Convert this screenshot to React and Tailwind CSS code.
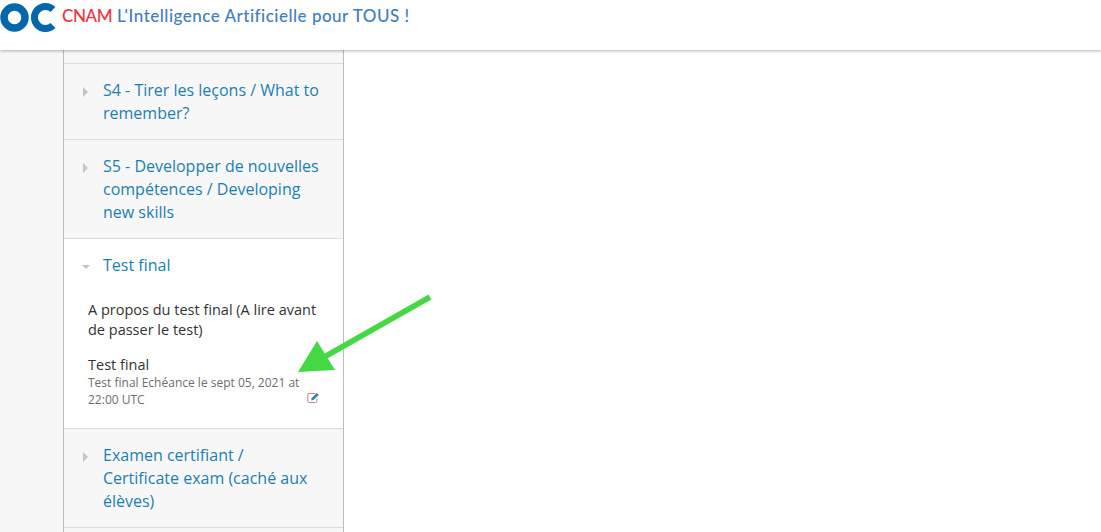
import React from "react";

const sans = "font-['Open_Sans',sans-serif]";

const Caret = ({ open }) => (
  <svg width="8" height="10" viewBox="0 0 8 10" className="shrink-0">
    {open ? <path d="M0 3h8L4 7z" fill="#c4c4c4" /> : <path d="M1 0l5 5-5 5z" fill="#c4c4c4" />}
  </svg>
);

const Section = ({ lines, open, children }) => (
  <div className={`border-b border-[#dddddd] ${open ? "bg-white" : "bg-[#f7f7f7]"}`}>
    <div className="flex pl-[18px] pr-2 pt-[15px] pb-[14px]">
      <div className="w-[21px] pt-[8px]"><Caret open={open} /></div>
      <div className="text-[16px] leading-[23px] text-[#1b7fb3]">
        {lines.map((l) => <div key={l} className="whitespace-nowrap">{l}</div>)}
      </div>
    </div>
    {children}
  </div>
);

export default function App() {
  return (
    <div className={`relative h-[532px] w-[1101px] overflow-hidden bg-white ${sans}`}>
      {/* header */}
      <header className="relative z-10 flex h-[50px] items-start bg-white shadow-[0_1px_3px_rgba(0,0,0,0.3)]">
        <svg width="56" height="30" viewBox="0 0 56 30" className="mt-[2px] shrink-0">
          <circle cx="14.5" cy="15.5" r="10.5" fill="none" stroke="#0567ab" strokeWidth="7.5" />
          <path d="M53 7.5A11 11 0 1 0 53 23.5" fill="none" stroke="#0567ab" strokeWidth="7" />
        </svg>
        <div className="ml-[6px] mt-[5px] whitespace-nowrap font-['Lato',sans-serif] text-[17px] font-medium leading-[22px] tracking-[0.5px] text-[#3f7dbf]">
          <span className="tracking-[-0.4px] text-[#f0323c]">CNAM</span> L'Intelligence Artificielle pour TOUS !
        </div>
      </header>

      <div className="flex h-[482px]">
        <div className="w-[63px] bg-[#f7f7f7]" />
        {/* course outline */}
        <aside className="w-[281px] border-x border-[#bdbdbd] bg-[#f7f7f7]">
          <div className="h-[14px] border-b border-[#dddddd]" />
          <Section lines={["S4 - Tirer les leçons / What to", "remember?"]} />
          <Section lines={["S5 - Developper de nouvelles", "compétences / Developing", "new skills"]} />
          <Section lines={["Test final"]} open>
            <div className="h-[137px] pl-[24px] pr-[23px] pt-[9px] text-[#333333]">
              <div className="text-[14.5px] leading-[20px]">
                <div className="whitespace-nowrap">A propos du test final (A lire avant</div>
                <div>de passer le test)</div>
              </div>
              <div className="mt-[16px] flex items-end justify-between">
                <div>
                  <div className="text-[14.5px] leading-[18px]">Test final</div>
                  <div className="text-[12px] leading-[17px] text-[#6d6d6d]">
                    <div className="whitespace-nowrap">Test final Echéance le sept 05, 2021 at</div>
                    <div>22:00 UTC</div>
                  </div>
                </div>
                <svg width="13" height="11" viewBox="0 0 13 11" className="mb-[5px] shrink-0">
                  <path d="M8.5 1.5H2A1.2 1.2 0 0 0 .8 2.7v6.6A1.2 1.2 0 0 0 2 10.5h6.6a1.2 1.2 0 0 0 1.2-1.2V7" fill="none" stroke="#b98a80" strokeWidth="1" />
                  <path d="M4.6 6.2 9.8 1l1.9 1.9-5.2 5.2-2.3.4z" fill="#3a7cab" />
                </svg>
              </div>
            </div>
          </Section>
          <Section lines={["Examen certifiant /", "Certificate exam (caché aux", "élèves)"]} />
        </aside>
      </div>

      {/* green annotation arrow */}
      <svg width="1101" height="532" className="pointer-events-none absolute left-0 top-0 z-20">
        <path d="M430 297 326 356" stroke="#44d844" strokeWidth="5.5" fill="none" />
        <path d="M317 341 298 372 335 370z" fill="#44d844" />
      </svg>
    </div>
  );
}
